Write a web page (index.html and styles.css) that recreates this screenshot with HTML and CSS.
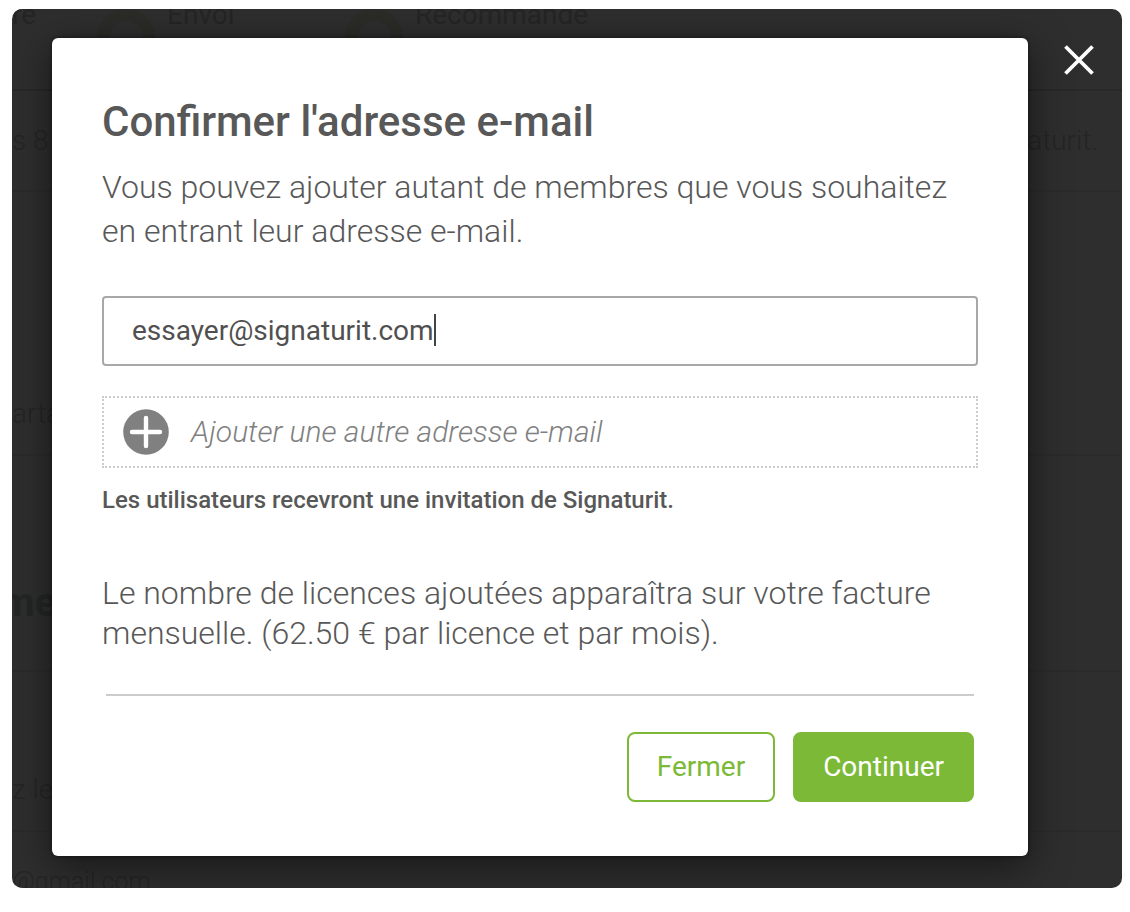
FILE: index.html
```html
<!DOCTYPE html>
<html lang="fr">
<head>
<meta charset="utf-8">
<meta name="viewport" content="width=device-width, initial-scale=1">
<title>Confirmer l'adresse e-mail</title>
<link rel="stylesheet" href="styles.css">
</head>
<body>
<main class="stage">
  <div class="page" aria-hidden="true">
    <div class="page-row page-tabs">
      <span class="tab-first">re</span>
      <span class="tab"><i class="ring"></i>Envoi</span>
      <span class="tab tab-wide"><i class="ring"></i>Recommandé</span>
    </div>
    <div class="page-row page-notice"><span>s 8 j</span><span>aturit.</span></div>
    <div class="page-row page-share"><span>arta</span></div>
    <div class="page-row page-heading"><span>me</span></div>
    <div class="page-row page-list"><span>z le</span></div>
    <div class="page-row page-mail"><span>@gmail.com</span></div>
  </div>

  <section class="modal" role="dialog" aria-modal="true" aria-labelledby="modal-title">
    <h1 class="title" id="modal-title">Confirmer l'adresse e-mail</h1>
    <p class="intro"><label for="email">Vous pouvez ajouter autant de membres que vous souhaitez en entrant leur adresse e-mail.</label></p>
    <input class="email" id="email" type="email" value="essayer@signaturit.com">
    <button class="add" type="button">
      <svg class="add-icon" viewBox="0 0 46 46" aria-hidden="true">
        <circle cx="23" cy="23" r="22.8" fill="#808080"/>
        <path d="M23 9v28M9 23h28" stroke="#fff" stroke-width="4.400" stroke-linecap="round"/>
      </svg>
      <span>Ajouter une autre adresse e-mail</span>
    </button>
    <p class="hint">Les utilisateurs recevront une invitation de Signaturit.</p>
    <p class="billing">Le nombre de licences ajoutées apparaîtra sur votre facture mensuelle. (62.50 € par licence et par mois).</p>
    <footer class="actions">
      <button class="btn btn-outline" type="button">Fermer</button>
      <button class="btn btn-solid" type="button">Continuer</button>
    </footer>
  </section>

  <button class="close" type="button" aria-label="Fermer la fenêtre">
    <svg viewBox="0 0 30 30" aria-hidden="true"><path d="M1.500 1.500l27 27M28.500 1.500l-27 27" stroke="#fff" stroke-width="3.800"/></svg>
  </button>
</main>
</body>
</html>
```
FILE: styles.css
```css
* {
  box-sizing: border-box;
}

body {
  margin: 0;
  padding: 9px 8px 24px 12px;
  background: #fff;
  color: #585858;
  font-family: Roboto, "Liberation Sans", sans-serif;
}

.stage {
  position: relative;
  display: flex;
  align-items: flex-start;
  gap: 36px;
  padding: 29px 28px 32px 40px;
  overflow: hidden;
  border-radius: 10px;
  background: #2e2e2e;
}

/* Dimmed page under the dialog */
.page {
  position: absolute;
  inset: 0;
  display: flex;
  flex-direction: column;
  color: #252525;
  font-size: 28px;
  font-weight: 300;
  line-height: 32px;
}

.page-row {
  display: flex;
  flex: none;
  align-items: center;
  border-bottom: 2px solid #2b2b2b;
  white-space: nowrap;
}

.page-tabs {
  align-items: flex-start;
  height: 82px;
  border-color: #282828;
  font-size: 28px;
  font-weight: 400;
  line-height: 12px;
}

.tab-first {
  width: 85px;
}

.tab {
  display: flex;
  gap: 12px;
  width: 248px;
}

.tab-wide {
  width: auto;
}

.ring {
  width: 58px;
  height: 58px;
  border: 12px solid #2b2b27;
  border-radius: 50%;
}

.page-notice {
  justify-content: space-between;
  height: 101px;
  padding-right: 24px;
}

.page-share {
  align-items: flex-end;
  height: 264px;
  padding-bottom: 24px;
}

.page-heading {
  height: 216px;
  padding-top: 80px;
  color: #242626;
  font-size: 40px;
  font-weight: 700;
}

.page-heading span {
  margin-left: -12px;
}

.page-list {
  align-items: flex-end;
  height: 160px;
  padding-bottom: 24px;
}

.page-mail {
  align-items: flex-start;
  padding-top: 34px;
  border: 0;
  font-size: 25px;
}

.modal {
  position: relative;
  flex: 1;
  min-width: 0;
  padding: 62px 50px 54px;
  border-radius: 6px;
  background: #fff;
  box-shadow: 0 10px 40px rgba(0, 0, 0, 0.5), 0 0 4px rgba(0, 0, 0, 0.5);
}

.title {
  margin: 0;
  font-size: 42px;
  font-weight: 500;
  line-height: 44px;
}

.intro {
  margin: 21px 0 43px;
  font-size: 32px;
  font-weight: 300;
  line-height: 44px;
}

.email {
  display: block;
  width: 100%;
  height: 70px;
  padding: 0 28px 2px;
  border: 2px solid #a8a8a8;
  border-radius: 4px;
  outline: 0;
  /* text cursor */
  background: linear-gradient(#444, #444) 330px 16px / 2px 32px no-repeat #fff;
  color: #505050;
  font: 400 28px/32px Roboto, "Liberation Sans", sans-serif;
}

.add {
  display: flex;
  align-items: center;
  gap: 22px;
  width: 100%;
  height: 72px;
  margin-top: 30px;
  padding: 0 19px;
  border: 2px dotted #ccc;
  background: #fff;
  color: #808080;
  font: italic 300 30px/36px Roboto, "Liberation Sans", sans-serif;
  text-align: left;
}

.add-icon {
  flex: none;
  width: 46px;
  height: 46px;
}

.hint {
  margin: 16px 0 0;
  font-size: 24px;
  font-weight: 500;
  line-height: 32px;
}

.billing {
  margin: 57px 0 0;
  font-size: 32px;
  font-weight: 300;
  line-height: 40px;
}

.actions {
  display: flex;
  justify-content: flex-end;
  gap: 18px;
  margin: 41px 4px 0;
  padding-top: 36px;
  border-top: 2px solid #ccc;
}

.btn {
  height: 70px;
  padding: 0 28px;
  border: 2px solid #7cb937;
  border-radius: 8px;
  font: 400 28px/32px Roboto, "Liberation Sans", sans-serif;
}

.btn-outline {
  background: #fff;
  color: #7cb937;
}

.btn-solid {
  background: #7cb937;
  color: #fff;
}

.close {
  position: relative;
  flex: none;
  width: 30px;
  height: 30px;
  margin-top: 7px;
  padding: 0;
  border: 0;
  background: none;
}

.close svg {
  display: block;
}
```
